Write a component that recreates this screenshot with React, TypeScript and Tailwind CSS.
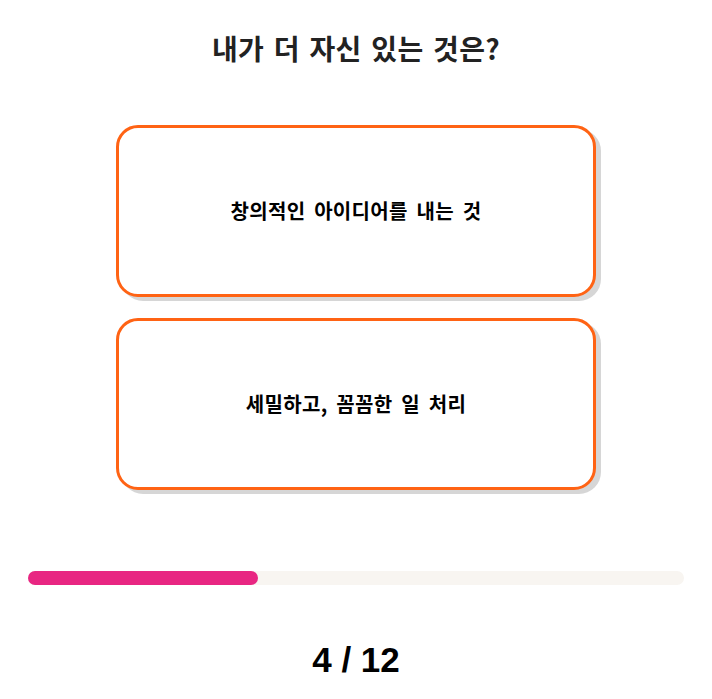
import React from 'react';

const options = ['창의적인 아이디어를 내는 것', '세밀하고, 꼼꼼한 일 처리'];

const App: React.FC = () => {
    const current = 4;
    const total = 12;

    return (
        <div className="min-h-[699px] w-full bg-white flex flex-col items-center font-['Noto_Sans_CJK_KR','Noto_Sans',sans-serif]">
            {/* Question */}
            <h1 className="pt-[28px] text-[28px] leading-[40px] font-bold text-[#222222] tracking-[0.3px] [word-spacing:3px]">
                내가 더 자신 있는 것은?
            </h1>

            {/* Answer cards */}
            <div className="mt-[57px] flex flex-col gap-[21px]">
                {options.map((text) => (
                    <button
                        key={text}
                        className="w-[480px] h-[172px] flex items-center justify-center rounded-[22px] border-[3px] border-[#ff6314] bg-white shadow-[5px_4px_0_#d6d6d6] text-[20px] font-bold text-black tracking-[0.3px] [word-spacing:4px] cursor-pointer"
                    >
                        {text}
                    </button>
                ))}
            </div>

            {/* Progress */}
            <div className="mt-[81px] w-full px-[28px]">
                <div className="h-[14px] w-full rounded-full bg-[#f8f5f1]">
                    <div className="h-full w-[230px] rounded-full bg-[#e82682]" />
                </div>
            </div>

            <div className="mt-[50px] text-[35px] leading-[50px] font-bold text-black font-['Liberation_Sans',sans-serif]">
                {`${current} / ${total}`}
            </div>
        </div>
    );
};

export default App;
